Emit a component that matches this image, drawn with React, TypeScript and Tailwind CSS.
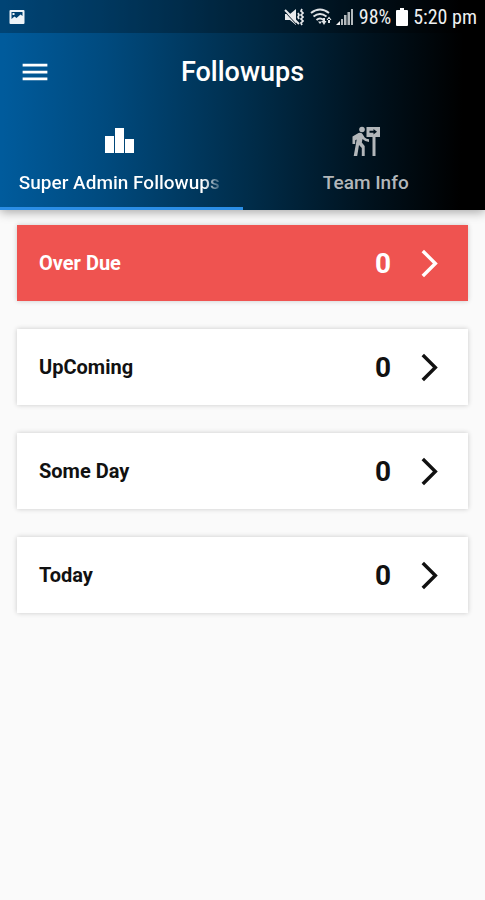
import { MdArrowForwardIos, MdMenu } from "react-icons/md";

const followups = [
  { label: "Over Due", count: 0, urgent: true },
  { label: "UpComing", count: 0, urgent: false },
  { label: "Some Day", count: 0, urgent: false },
  { label: "Today", count: 0, urgent: false },
];

function PhotoIcon() {
  return (
    <svg viewBox="0 0 16 16" className="h-4 w-4" aria-hidden="true">
      <path
        fill="#eef4f8"
        fillRule="evenodd"
        d="M1.5 1h13q1 0 1 1v12q0 1-1 1h-13q-1 0-1-1V2q0-1 1-1zM2.5 3v7l3-2.500 2 1.500 4-3.500 2 1.500V3zM3.500 4h2v2h-2z"
      />
    </svg>
  );
}

function MutedIcon() {
  return (
    <svg viewBox="0 0 20 18" className="h-[18px] w-5" aria-hidden="true">
      <path fill="#e8eaec" d="M1 6h5l6-5v16l-6-5H1z" />
      <path d="M2 5l12 13" stroke="#031522" strokeWidth="1" />
      <path d="M1 2l14 14" stroke="#e8eaec" strokeWidth="2" />
      <path
        d="M14 5l1 2-1 2 1 2M18 1l-1 2 2 2-2 2 2 2-2 2 2 2-2 2 1 2"
        fill="none"
        stroke="#e8eaec"
        strokeWidth="1.700"
      />
    </svg>
  );
}

function WifiIcon() {
  return (
    <svg viewBox="0 0 22 18" className="h-[18px] w-[22px]" aria-hidden="true">
      <g fill="none" stroke="#dfe3e6" strokeWidth="2">
        <path d="M1 5q9-7 18 0M3.500 8.500q6.500-5 13 0M6.500 12q3.500-3 7 0" />
      </g>
      <path
        fill="#dfe3e6"
        d="M8 13.500h4l-2 2.500zM11.500 13h5L14 17zM16.500 12h5L19 8.500zM18 11h2v4h-2zM13 10h2v4h-2z"
      />
    </svg>
  );
}

function SignalIcon() {
  return (
    <svg viewBox="0 0 17 18" className="h-[18px] w-[17px]" aria-hidden="true">
      <path fill="#f4f4f4" d="M4 13v4H0z" />
      <path
        fill="#b4babd"
        d="M5 11h2v6H5zM8 7h2.500v10H8zM11.500 4H14v13h-2.500zM15 1h2v16h-2z"
      />
    </svg>
  );
}

function BatteryIcon() {
  return (
    <svg viewBox="0 0 12 18" className="h-[18px] w-3" aria-hidden="true">
      <path fill="#fff" d="M4 0h4v2h3q1 0 1 1v14q0 1-1 1H1q-1 0-1-1V3q0-1 1-1h3z" />
    </svg>
  );
}

function BarsIcon() {
  return (
    <svg viewBox="0 0 32 32" className="h-8 w-8" fill="currentColor" aria-hidden="true">
      <path d="M2 11h9v17H2zM12 3h9v25h-9zM22 14h9v14h-9z" />
    </svg>
  );
}

function WalkerSignIcon() {
  return (
    <svg viewBox="0 0 32 32" className="h-8 w-8" fill="currentColor" aria-hidden="true">
      <circle cx="12" cy="4.500" r="2.800" />
      <path d="M2.500 11.500l6-3.500q2.500-1 4 1l2.200 3.500q1.500 1.500 4.300 1.700v2.800q-4-.3-6.500-3l-.7 3.500 2.900 3.500V31h-2.900v-8l-2.800-3L7.200 31H3.700l3-16.500-1.500.8V19H2.500z" />
      <path
        fillRule="evenodd"
        d="M16.500 2h13.500v10h-4.500v19h-3V12h-6zM19.500 5.800v2h4v1.700l3.500-2.700L23.500 4v1.800z"
      />
    </svg>
  );
}

function StatusBar() {
  return (
    <div className="flex h-[33px] items-center justify-between bg-black/25 pr-2 pl-[9px] font-[Roboto_Condensed,Roboto,sans-serif] text-xl text-[#eef0f1]">
      <PhotoIcon />
      <div className="flex items-center pt-px">
        <MutedIcon />
        <span className="ml-1.5 flex">
          <WifiIcon />
        </span>
        <span className="ml-1 flex">
          <SignalIcon />
        </span>
        <span className="ml-1.5">98%</span>
        <span className="mx-[5px] flex">
          <BatteryIcon />
        </span>
        <span>5:20 pm</span>
      </div>
    </div>
  );
}

export default function App() {
  return (
    <div className="min-h-screen bg-[#fafafa] font-[Roboto,sans-serif]">
      <header className="relative bg-linear-[91deg,#005b9c_1%,#004a7e_22%,#002c49_52%,#00121e_76%,#000_95%] shadow-[0_2px_10px_rgba(0,0,0,0.35)]">
        <StatusBar />
        <div className="grid h-[77px] grid-cols-[1fr_auto_1fr] items-center px-5">
          <button type="button" aria-label="Open menu" className="w-fit">
            <MdMenu className="h-[34px] w-[30px] scale-110 text-white" />
          </button>
          <h1 className="pt-0.5 text-[27px] font-medium text-white">Followups</h1>
        </div>
        <div role="tablist" className="grid h-[100px] grid-cols-2">
          <button
            type="button"
            role="tab"
            aria-selected="true"
            className="flex flex-col items-center border-b-3 border-[#2b8ee6] pt-[15px] pr-1 text-white"
          >
            <BarsIcon />
            <span className="mt-3 bg-linear-to-r from-white from-92% to-white/20 bg-clip-text text-[19px] font-medium whitespace-nowrap text-transparent">
              Super Admin Followups
            </span>
          </button>
          <button
            type="button"
            role="tab"
            aria-selected="false"
            className="flex flex-col items-center pt-[15px] pl-1 text-[#b3b7ba]"
          >
            <WalkerSignIcon />
            <span className="mt-3 text-[19px] font-medium">Team Info</span>
          </button>
        </div>
      </header>

      <main className="flex flex-col gap-7 px-[17px] pt-[15px]">
        {followups.map(({ label, count, urgent }) => (
          <button
            key={label}
            type="button"
            className={`flex h-[76px] items-center px-[22px] shadow-[0_0_5px_rgba(0,0,0,0.2)] ${
              urgent ? "bg-[#ef5350] text-white" : "bg-white text-[#111]"
            }`}
          >
            <span className="flex-1 text-left text-xl font-bold">{label}</span>
            <span className="pt-0.5 text-[28px] font-bold">{count}</span>
            <MdArrowForwardIos className="ml-[22px] h-[33px] w-[33px]" />
          </button>
        ))}
      </main>
    </div>
  );
}
